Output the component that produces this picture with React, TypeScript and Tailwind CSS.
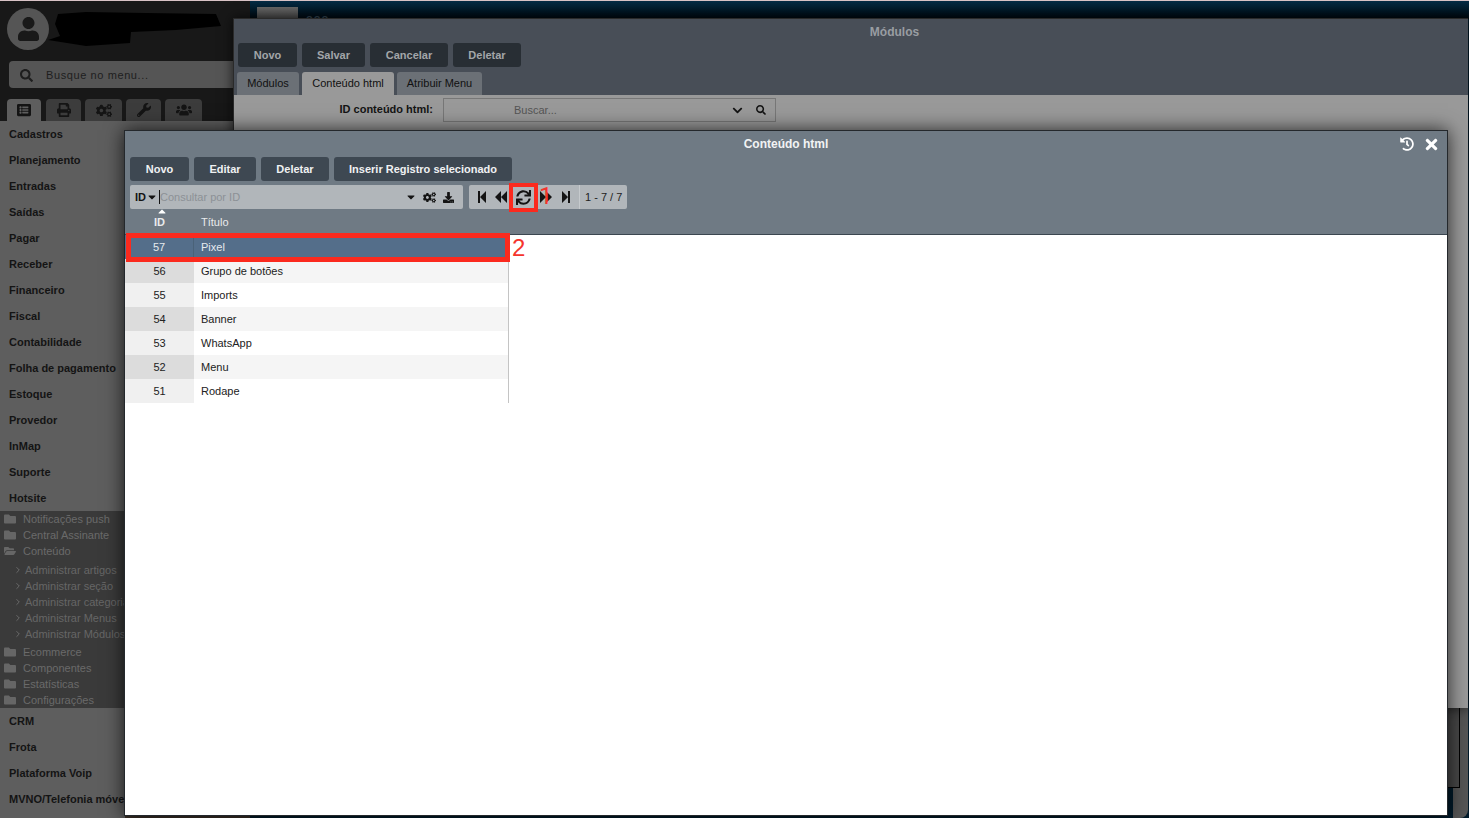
import React from "react";
import {
  FaUser, FaSearch, FaListAlt, FaPrint, FaCogs, FaWrench, FaUsers, FaFolder, FaFolderOpen,
  FaSync, FaDownload, FaHistory, FaTimes, FaChevronDown, FaCaretDown,
} from "react-icons/fa";
import { ChevronRight } from "lucide-react";

const menuTop = ["Cadastros", "Planejamento", "Entradas", "Saídas", "Pagar", "Receber", "Financeiro", "Fiscal", "Contabilidade", "Folha de pagamento", "Estoque", "Provedor", "InMap", "Suporte", "Hotsite"];
const menuBottom = ["CRM", "Frota", "Plataforma Voip", "MVNO/Telefonia móvel"];
const rows = [
  ["57", "Pixel"], ["56", "Grupo de botões"], ["55", "Imports"], ["54", "Banner"], ["53", "WhatsApp"], ["52", "Menu"], ["51", "Rodape"],
];

function MenuItem({ label }: { label: string }) {
  return <div className="h-[26px] pl-[9px] flex items-center text-[11px] font-bold text-[#141414] whitespace-nowrap overflow-hidden">{label}</div>;
}

function Folder({ label, open }: { label: string; open?: boolean }) {
  return (
    <div className="h-4 flex items-center pl-1 text-[11px] text-[#6a6a6a] whitespace-nowrap">
      {open ? <FaFolderOpen className="w-3 h-3 text-[#666]" /> : <FaFolder className="w-3 h-3 text-[#666]" />}
      <span className="ml-[7px]">{label}</span>
    </div>
  );
}

function Leaf({ label }: { label: string }) {
  return (
    <div className="h-4 flex items-center pl-[13px] text-[11px] text-[#666] whitespace-nowrap">
      <ChevronRight className="w-[10px] h-[10px] text-[#7a7a7a]" strokeWidth={1.75} />
      <span className="ml-[2px]">{label}</span>
    </div>
  );
}

function Btn({ label, w, dark }: { label: string; w: string; dark?: boolean }) {
  return (
    <div className={`${w} h-6 rounded-[3px] flex items-center justify-center text-[11px] font-bold ${dark ? "bg-[#282e34] text-[#a3a6a9]" : "bg-[#3e4852] text-[#f0f1f2]"}`}>
      {label}
    </div>
  );
}

function Skip({ dir }: { dir: "first" | "prev" | "next" | "last" }) {
  const d = {
    first: "M3 1 H5 V13 H3 Z M5 7 L11 1 V13 Z",
    prev: "M7 1 V13 L1 7 Z M13 1 V13 L7 7 Z",
    next: "M1 1 V13 L7 7 Z M7 1 V13 L13 7 Z",
    last: "M9 1 H11 V13 H9 Z M9 7 L3 1 V13 Z",
  }[dir];
  return (
    <svg className="w-[14px] h-[14px] shrink-0" viewBox="0 0 14 14" fill="currentColor">
      <path d={d} />
    </svg>
  );
}

export default function App() {
  return (
    <div className="relative w-[1469px] h-[818px] overflow-hidden flex bg-[#00101c] font-['Liberation_Sans',Arial,sans-serif]">
      {/* Sidebar */}
      <aside className="w-[233px] h-full shrink-0 flex flex-col bg-[#181818] border-t border-[#d9c3c6]">
        <div className="h-[60px] shrink-0 relative pl-[7px] pt-[7px]">
          <div className="w-[42px] h-[42px] rounded-full bg-[#555] flex items-center justify-center">
            <FaUser className="w-[21px] h-[24px] text-[#191919]" />
          </div>
          <svg className="absolute left-[46px] top-[9px]" width="180" height="38" viewBox="0 0 180 38">
            <path d="M12 4 L40 2 L100 3 L170 4 L175 16 L130 20 L85 22 L84 33 L40 36 L2 30 L14 26 L9 14 Z" fill="#000" />
          </svg>
        </div>
        <div className="h-[27px] shrink-0 ml-[9px] rounded-l-[4px] bg-[#555] flex items-center pl-[11px] pt-[1px] text-[11px] tracking-[0.6px] text-[#1e1e1e]">
          <FaSearch className="w-[13px] h-[13px] mr-[13px] text-[#1e1e1e]" />
          Busque no menu...
        </div>
        <div className="h-[22px] mt-[11px] shrink-0 pl-[7px] flex gap-1">
          <div className="w-[34px] rounded-t-[4px] bg-[#5e5e5e] flex items-center justify-center"><FaListAlt className="w-[14px] h-[14px] text-[#141414]" /></div>
          <div className="w-[35px] ml-[1px] rounded-t-[4px] bg-[#3c3c3c] flex items-center justify-center"><FaPrint className="w-[14px] h-[14px] text-[#141414]" /></div>
          <div className="w-[37px] rounded-t-[4px] bg-[#3c3c3c] flex items-center justify-center"><FaCogs className="w-[16px] h-[15px] text-[#141414]" /></div>
          <div className="w-[35px] rounded-t-[4px] bg-[#3c3c3c] flex items-center justify-center"><FaWrench className="w-[14px] h-[14px] text-[#141414]" /></div>
          <div className="w-[37px] rounded-t-[4px] bg-[#3c3c3c] flex items-center justify-center"><FaUsers className="w-[16px] h-[16px] text-[#141414]" /></div>
        </div>
        <div className="flex-1 bg-[#5e5e5e]">
          {menuTop.map((m) => <MenuItem key={m} label={m} />)}
          <div className="h-[197px] bg-[#3a3a3a] overflow-hidden">
            <Folder label="Notificações push" />
            <Folder label="Central Assinante" />
            <Folder label="Conteúdo" open />
            <div className="pt-[3px] pb-[2px]">
              <Leaf label="Administrar artigos" />
              <Leaf label="Administrar seção" />
              <Leaf label="Administrar categorias" />
              <Leaf label="Administrar Menus" />
              <Leaf label="Administrar Módulos" />
            </div>
            <Folder label="Ecommerce" />
            <Folder label="Componentes" />
            <Folder label="Estatísticas" />
            <Folder label="Configurações" />
          </div>
          {menuBottom.map((m) => <MenuItem key={m} label={m} />)}
        </div>
      </aside>

      {/* Main background */}
      <main className="flex-1 h-full flex border-t border-[#d9c3c6]">
        <div className="w-[17px] h-full shrink-0 bg-[#181818]" />
        <div className="flex-1 h-full bg-[#001a2a]">
          <div className="h-[18px] bg-gradient-to-b from-[#052c45] to-[#00080f] pl-[7px] pt-[6px] flex items-start">
            <div className="w-[41px] h-[11px] bg-gradient-to-b from-[#666] to-[#4a4a4a]" />
            <span className="ml-2 mt-[6px] text-[11px] leading-none text-[#33434f] font-bold tracking-[1px]">ooo</span>
          </div>
        </div>
      </main>

      {/* Windows behind, lower right corner */}
      <div className="absolute left-[1453px] top-[700px] w-[15px] h-[118px] bg-[#555] rounded-br-[8px]" />
      <div className="absolute left-[1440px] top-[700px] w-[20px] h-[88px] bg-[#484848] border-r border-b border-black" />
      <div className="absolute left-[125px] bottom-0 w-[125px] h-[2px] bg-[#3a3028]" />

      {/* Outer window */}
      <section className="absolute left-[233px] top-[18px] w-[1235px] h-[690px] flex flex-col bg-[#999] shadow-[0_0_12px_rgba(0,0,0,0.7)] border-l border-t border-[#2a2a2a]">
        <div className="h-[76px] shrink-0 bg-[#484e57]">
          <div className="h-6 flex items-center justify-center text-xs font-bold text-[#999da2] pt-[1px] pl-[87px]">Módulos</div>
          <div className="flex gap-[5px] pl-1">
            <Btn label="Novo" w="w-[59px]" dark />
            <Btn label="Salvar" w="w-[63px]" dark />
            <Btn label="Cancelar" w="w-[78px]" dark />
            <Btn label="Deletar" w="w-[68px]" dark />
          </div>
          <div className="flex gap-[3px] pl-[3px] mt-[5px] text-[11px] text-[#111]">
            <div className="w-[62px] h-[23px] rounded-t-[3px] bg-[#6b7076] flex items-center justify-center">Módulos</div>
            <div className="w-[92px] h-[23px] rounded-t-[3px] bg-[#999] flex items-center justify-center">Conteúdo html</div>
            <div className="w-[85px] h-[23px] rounded-t-[3px] bg-[#6b7076] flex items-center justify-center">Atribuir Menu</div>
          </div>
        </div>
        <div className="flex items-center h-6 mt-[3px]">
          <div className="w-[199px] text-right text-[11px] font-bold text-[#141414] pb-[2px]">ID conteúdo html:</div>
          <div className="ml-[10px] w-[333px] h-6 border border-[#777] flex items-center text-[11px] text-[#555]">
            <span className="ml-[70px]">Buscar...</span>
            <FaChevronDown className="w-[11px] h-[11px] ml-auto text-[#141414]" />
            <FaSearch className="w-[10px] h-[10px] ml-[13px] mr-[9px] text-[#141414]" />
          </div>
        </div>
      </section>

      {/* Modal window */}
      <section className="absolute left-[124px] top-[130px] w-[1324px] h-[686px] flex flex-col bg-white border border-[#24282c] shadow-[0_0_18px_rgba(0,0,0,0.75)]">
        <div className="h-[104px] shrink-0 bg-[#6f7a84] border-b border-[#3b4650]">
          <div className="h-[26px] flex items-center relative justify-center text-xs font-bold text-[#f2f3f4]">
            Conteúdo html
            <FaHistory className="absolute right-[33px] top-[6px] w-[14px] h-[14px] text-white" />
            <FaTimes className="absolute right-[7px] top-[5px] w-[17px] h-[17px] text-white" />
          </div>
          <div className="flex gap-[5px] pl-[5px]">
            <Btn label="Novo" w="w-[59px]" />
            <Btn label="Editar" w="w-[62px]" />
            <Btn label="Deletar" w="w-[68px]" />
            <Btn label="Inserir Registro selecionado" w="w-[178px]" />
          </div>
          <div className="flex mt-1 pl-[5px]">
            <div className="w-[333px] h-6 rounded-[2px] bg-[#b1b6ba] flex items-center text-[11px]">
              <span className="ml-[5px] font-bold text-[#141414]">ID</span>
              <FaCaretDown className="w-3 h-3 text-[#141414]" />
              <span className="ml-[1px] w-px h-[14px] bg-[#141414]" />
              <span className="text-[#8c9196]">Consultar por ID</span>
              <FaCaretDown className="w-3 h-3 ml-auto text-[#141414]" />
              <FaCogs className="w-[13px] h-[13px] ml-[6px] text-[#141414]" />
              <FaDownload className="w-[11px] h-[11px] ml-[7px] mr-[9px] text-[#141414]" />
            </div>
            <div className="ml-[6px] w-[158px] h-6 rounded-[2px] bg-[#b1b6ba] flex items-center text-[#141414]">
              <span className="ml-[6px]"><Skip dir="first" /></span>
              <span className="ml-[5px]"><Skip dir="prev" /></span>
              <FaSync className="w-[15px] h-[15px] ml-[8px] shrink-0" />
              <span className="ml-[8px]"><Skip dir="next" /></span>
              <span className="ml-[6px]"><Skip dir="last" /></span>
              <div className="ml-[6px] h-6 border-l border-[#c6cacd] pl-[5px] flex items-center text-[11px] text-[#222] whitespace-nowrap">1 - 7 / 7</div>
            </div>
          </div>
          <div className="relative w-[383px] grid grid-cols-[69px_1fr] h-6 pt-[2px] items-center text-[11px] text-[#e9ebed]">
            <span className="text-center font-bold">ID</span>
            <span className="pl-[7px]">Título</span>
            <FaCaretDown className="absolute left-[31px] top-[-3px] w-3 h-3 rotate-180 text-white" />
          </div>
        </div>
        <div className="w-[384px] border-r border-[#c4c4c4] text-[11px]">
          {rows.map(([id, title], i) => {
            const sel = i === 0;
            const odd = i % 2 === 1;
            return (
              <div key={id} className={`grid grid-cols-[69px_1fr] h-6 items-center ${sel ? "bg-[#546e8a] text-[#e6eaee]" : odd ? "bg-[#f5f5f5] text-[#222]" : "bg-white text-[#222]"}`}>
                <span className={`h-full flex items-center justify-center ${sel ? "border-r border-[#4a6278]" : odd ? "bg-[#dcdcdc]" : "bg-[#f0f0f0]"}`}>{id}</span>
                <span className="pl-[7px]">{title}</span>
              </div>
            );
          })}
        </div>
      </section>

      {/* Annotations */}
      <div className="absolute left-[539px] top-[183px] font-['Roboto',sans-serif] text-[24px] leading-[27px] text-[#f5342c]">1</div>
      <div className="absolute left-[509px] top-[183px] w-[29px] h-[29px] border-[4px] border-[#fb2a1e]" />
      <div className="absolute left-[126px] top-[233px] w-[384px] h-[29px] border-[5px] border-[#fb2a1e]" />
      <div className="absolute left-[512px] top-[234px] text-[24px] leading-[27px] text-[#f5342c]">2</div>
    </div>
  );
}
